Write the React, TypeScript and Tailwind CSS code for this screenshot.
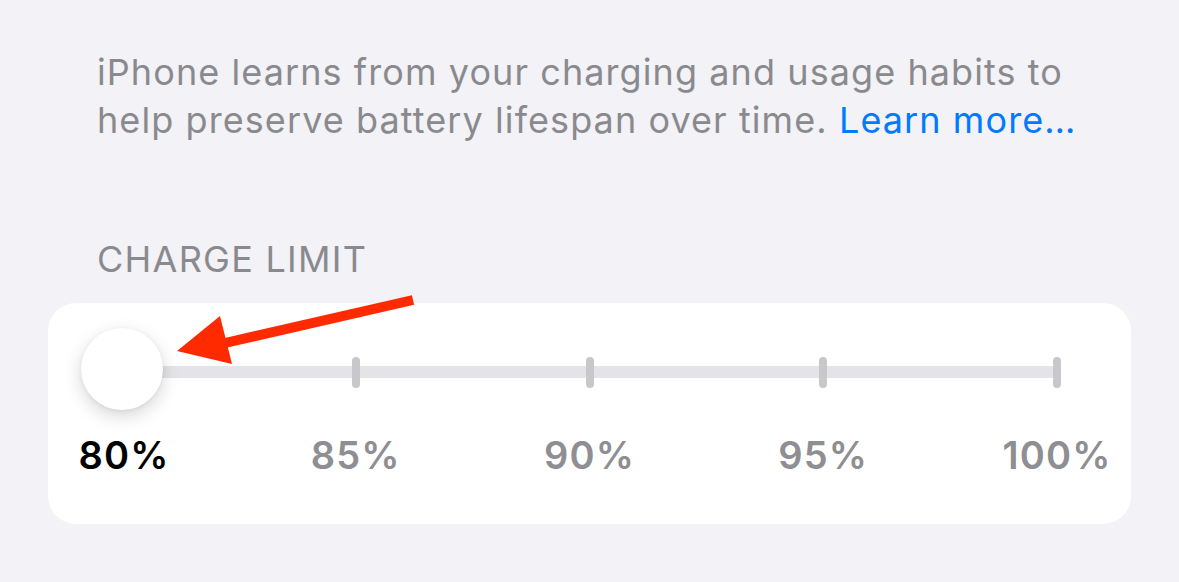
export default function App() {
  const labels = ['80%', '85%', '90%', '95%', '100%']

  return (
    <div className="relative h-[582px] w-full overflow-hidden bg-[#f2f2f7] px-[48px] font-['Inter','Liberation_Sans',sans-serif]">
      {/* Footer text */}
      <p className="pl-[49px] pt-[48px] text-[36px] leading-[48px] tracking-[0.03em] text-[#8a8a8e]">
        iPhone learns from your charging and usage habits to
        <br />
        help preserve battery lifespan over time. <span className="text-[#007aff]">Learn more…</span>
      </p>

      {/* Section header */}
      <h2 className="mt-[91px] mb-[20px] pl-[49px] text-[36px] leading-[48px] tracking-[0.035em] text-[#8a8a8e]">CHARGE LIMIT</h2>

      {/* Slider card */}
      <div className="rounded-[28px] bg-white pt-[63px] pb-[45px]">
        <div className="relative mx-[74px] h-3 rounded-full bg-[#e3e3e8]">
          <div className="absolute inset-y-0 -left-1 -right-1 flex items-center justify-between">
            {labels.map((l, i) => (
              <div key={l} className={i === 0 ? 'h-[31px] w-2' : 'h-[31px] w-2 rounded-full bg-[#c7c7cc]'} />
            ))}
          </div>
          <div className="absolute -top-[38px] -left-[41px] h-[82px] w-[82px] rounded-full bg-white shadow-[0_6px_18px_rgba(0,0,0,0.16),0_1px_4px_rgba(0,0,0,0.06)]" />
        </div>

        <div className="mt-[53px] flex justify-between px-[74px]">
          {labels.map((l, i) => (
            <div key={l} className="flex w-0 justify-center">
              <span
                className={
                  i === 0
                    ? 'ml-[4px] whitespace-nowrap text-[38px] font-semibold leading-[48px] tracking-[0.03em] text-black'
                    : 'whitespace-nowrap text-[38px] font-semibold leading-[48px] tracking-[0.03em] text-[#8e8e93]'
                }
              >
                {l}
              </span>
            </div>
          ))}
        </div>
      </div>

      {/* Annotation arrow */}
      <svg className="pointer-events-none absolute inset-0" width="1179" height="582" viewBox="0 0 1179 582">
        <line x1="413" y1="300" x2="212" y2="346" stroke="#ff2a00" strokeWidth="10" />
        <polygon points="177,351 220,316 232,364" fill="#ff2a00" />
      </svg>
    </div>
  )
}
